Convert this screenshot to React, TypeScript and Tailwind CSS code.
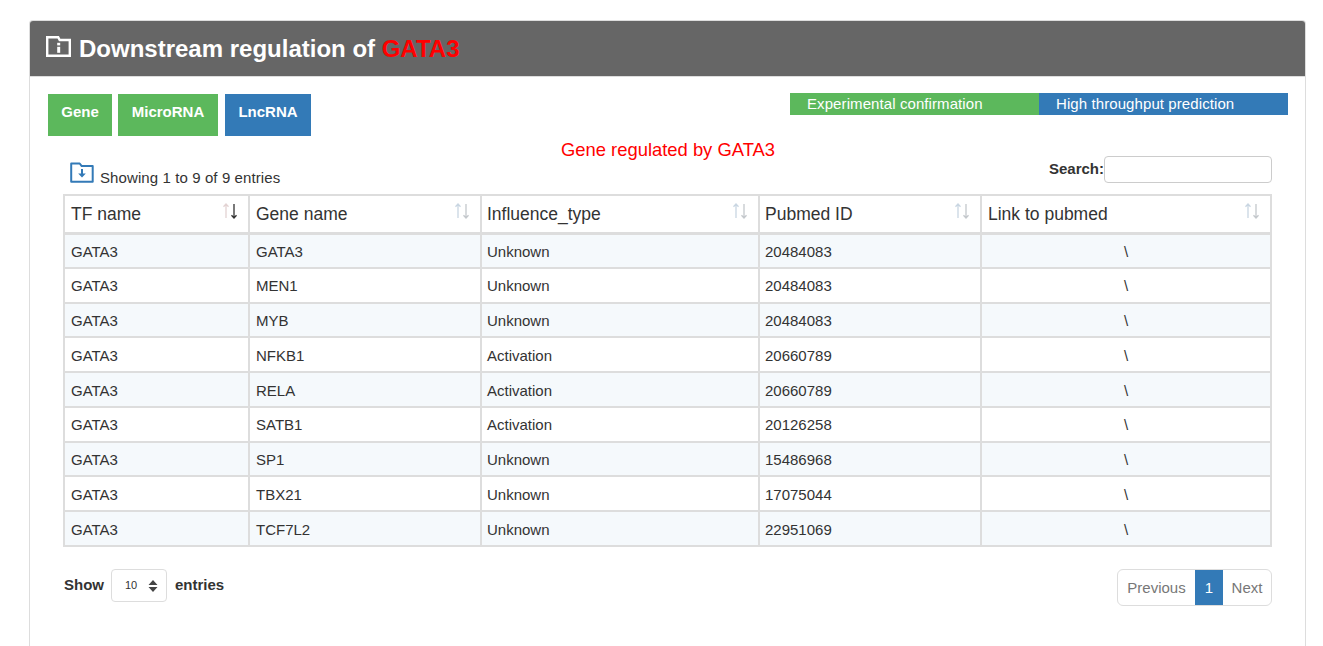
import React from 'react';

const rows = [
    ['GATA3', 'Unknown', '20484083'],
    ['MEN1', 'Unknown', '20484083'],
    ['MYB', 'Unknown', '20484083'],
    ['NFKB1', 'Activation', '20660789'],
    ['RELA', 'Activation', '20660789'],
    ['SATB1', 'Activation', '20126258'],
    ['SP1', 'Unknown', '15486968'],
    ['TBX21', 'Unknown', '17075044'],
    ['TCF7L2', 'Unknown', '22951069'],
];

const columns = [
    { name: 'TF name', width: 'w-[185px] pl-[6px]', active: true },
    { name: 'Gene name', width: 'w-[232px] pl-[6px]', active: false },
    { name: 'Influence_type', width: 'w-[278px] pl-[5px]', active: false },
    { name: 'Pubmed ID', width: 'w-[222px] pl-[5px]', active: false },
    { name: 'Link to pubmed', width: 'w-[290px] pl-[6px]', active: false },
];

const SortIcon = ({ active }: { active: boolean }) => (
    <svg width="18" height="18" viewBox="0 0 18 18" fill="none" className="absolute right-[9px] top-[6px]">
        <path d="M5 16V2M2.5 4.8 5 2l2.5 2.8" stroke={active ? '#e3d3d3' : '#c9d6e2'} strokeWidth="1.3" />
        <path d="M13 2v14M10.5 13.2 13 16l2.5-2.8" stroke={active ? '#333333' : '#c4c8cc'} strokeWidth="1.3" />
    </svg>
);

const FolderInfo = () => (
    <svg width="25" height="21" viewBox="0 0 25 21" fill="none" className="-mt-[5px]">
        <path d="M1.2 19.8V1.2h11l1.5 2.8h10.1v15.8z" stroke="#fff" strokeWidth="2.4" />
        <rect x="11.2" y="6.8" width="3" height="2.6" fill="#fff" />
        <rect x="11.2" y="10.8" width="3" height="6" fill="#fff" />
    </svg>
);

const FolderDown = () => (
    <svg width="24" height="21" viewBox="0 0 24 21" fill="none" className="-mt-[1px]">
        <path d="M1.2 19.8V1.5h8.5l2 2.6h11v15.7z" stroke="#337ab7" strokeWidth="2" strokeLinejoin="round" />
        <path d="M12 7v7" stroke="#337ab7" strokeWidth="2" />
        <path d="M8.2 11.5h7.6L12 15.6z" fill="#337ab7" />
    </svg>
);

export default function App() {
    return (
        <div className="h-[646px] overflow-hidden bg-white pt-5 px-[29px] text-[#333] font-['Liberation_Sans',Arial,sans-serif]">
            <div className="h-[640px] w-[1277px] border border-b-0 border-[#ddd] rounded-t-[4px]">
                {/* Panel heading */}
                <div className="h-[56px] bg-[#666] rounded-t-[3px] flex items-center gap-[8px] pl-[16px] border-b border-[#ddd]">
                    <FolderInfo />
                    <h3 className="text-[24px] font-bold text-white leading-none">
                        Downstream regulation of <span className="text-[#f00]">GATA3</span>
                    </h3>
                </div>

                <div className="px-[18px]">
                    {/* Tabs and legend */}
                    <div className="flex justify-between items-start pt-[17px] h-[59px]">
                        <div className="flex text-[15px] font-bold text-white">
                            <button className="w-[64px] h-[42px] bg-[#5cb85c] pb-[6px]">Gene</button>
                            <button className="w-[100px] h-[42px] ml-[6px] bg-[#5cb85c] pb-[6px]">MicroRNA</button>
                            <button className="w-[86px] h-[42px] ml-[7px] bg-[#337ab7] pb-[6px]">LncRNA</button>
                        </div>
                        <div className="flex w-[498px] h-[22px] -mt-px -mr-px text-[15px] leading-[22px] tracking-[0.09px] text-white">
                            <div className="w-1/2 bg-[#5cb85c] pl-[17px]">Experimental confirmation</div>
                            <div className="w-1/2 bg-[#337ab7] pl-[17px]">High throughput prediction</div>
                        </div>
                    </div>

                    {/* Table toolbar */}
                    <div className="grid grid-cols-[1fr_auto_1fr] h-[58px] pl-[22px] pr-[15px]">
                        <div className="flex items-start gap-[6px] pt-[27px] text-[15px] leading-[30px]">
                            <FolderDown />
                            <span className="whitespace-nowrap tracking-[0.1px]">Showing 1 to 9 of 9 entries</span>
                        </div>
                        <div className="text-[18.4px] leading-[20px] pt-[4px] mr-[6px] text-[#f00]">Gene regulated by GATA3</div>
                        <div className="flex justify-end items-start pt-[20px] text-[15px] font-bold">
                            <span className="leading-[26px]">Search:</span>
                            <input className="w-[168px] h-[27px] bg-white border border-[#ccc] rounded-[4px]" />
                        </div>
                    </div>

                    {/* Data table */}
                    <div className="pl-[15px] pr-[15px]">
                        <table className="w-[1207px] table-fixed border-collapse border-2 border-[#ddd] text-[15px]">
                            <thead>
                                <tr className="h-[38px]">
                                    {columns.map(col => (
                                        <th key={col.name} className={`${col.width} relative border-2 border-b-[3px] border-[#ddd] text-left text-[17.5px] font-normal`}>
                                            {col.name}
                                            <SortIcon active={col.active} />
                                        </th>
                                    ))}
                                </tr>
                            </thead>
                            <tbody>
                                {rows.map((row, i) => (
                                    <tr key={row[0]} className={`h-[34.75px] ${i % 2 === 0 ? 'bg-[#f5f9fc]' : 'bg-white'}`}>
                                        <td className="border-2 border-[#ddd] pl-[6px] pt-[3px]">GATA3</td>
                                        <td className="border-2 border-[#ddd] pl-[6px] pt-[3px]">{row[0]}</td>
                                        <td className="border-2 border-[#ddd] pl-[5px] pt-[3px]">{row[1]}</td>
                                        <td className="border-2 border-[#ddd] pl-[5px] pt-[3px]">{row[2]}</td>
                                        <td className="border-2 border-[#ddd] pt-[3px] text-center">\</td>
                                    </tr>
                                ))}
                            </tbody>
                        </table>

                        {/* Footer */}
                        <div className="flex justify-between items-start pt-[22px]">
                            <div className="flex items-center pl-px text-[15px] font-bold">
                                <span>Show</span>
                                <div className="relative w-[56px] h-[33px] ml-[7px] mr-[8px] border border-[#ddd] rounded-[4px] flex items-center pl-[13px] text-[11px] font-normal">
                                    10
                                    <svg width="10" height="12" viewBox="0 0 10 12" className="absolute right-[8px] top-[10px]">
                                        <path d="M5 0 9.5 5H.5zM5 12 .5 7h9z" fill="#444" />
                                    </svg>
                                </div>
                                <span>entries</span>
                            </div>
                            <div className="flex h-[37px] text-[15px] leading-[36px] text-[#777] border border-[#ddd] rounded-[6px] overflow-hidden">
                                <span className="w-[77px] text-center">Previous</span>
                                <span className="w-[28px] bg-[#337ab7] text-white text-center">1</span>
                                <span className="w-[48px] text-center">Next</span>
                            </div>
                        </div>
                    </div>
                </div>
            </div>
        </div>
    );
}
